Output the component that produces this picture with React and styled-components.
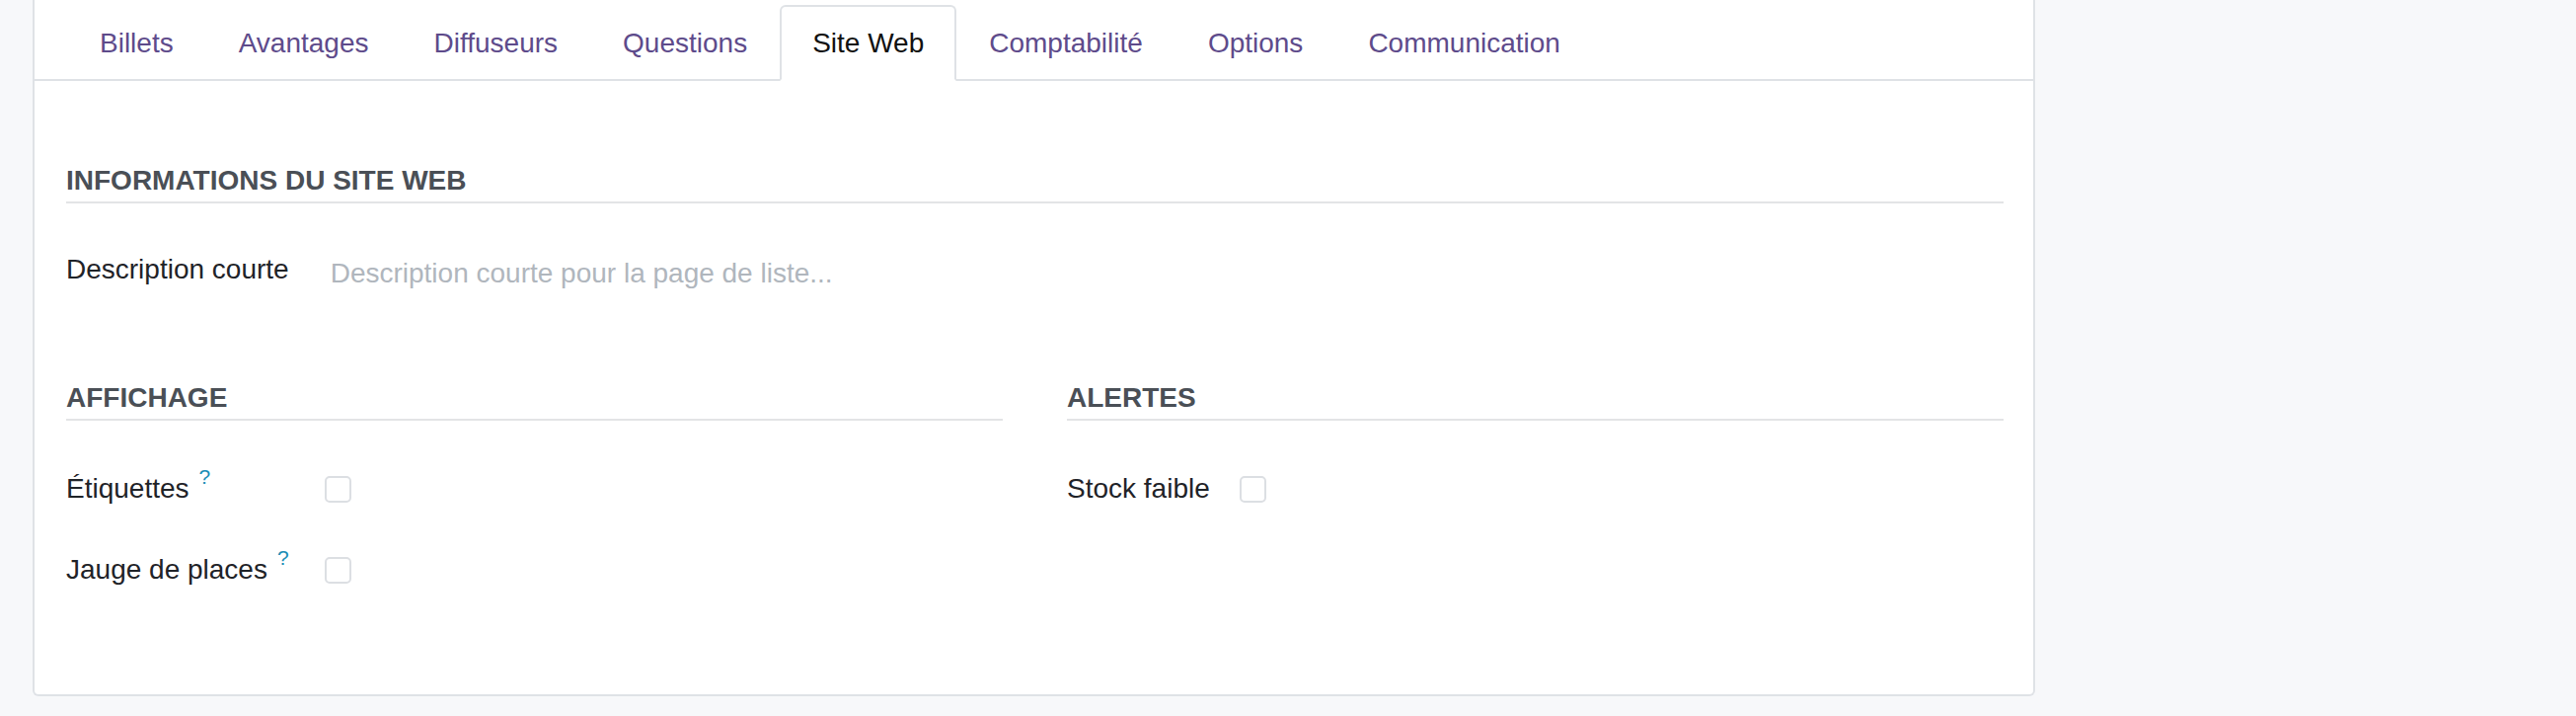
import React from "react";
import styled, { createGlobalStyle } from "styled-components";

const colors = {
  page: "#f7f8fa",
  sheet: "#ffffff",
  border: "#dfe2e6",
  rule: "#e3e4e6",
  tab: "#5e4b8b",
  tabActive: "#111111",
  heading: "#4a4f56",
  text: "#1f2328",
  placeholder: "#b0b6bd",
  help: "#1b8db5",
};

const GlobalStyle = createGlobalStyle`
  html, body {
    margin: 0;
    padding: 0;
    background: ${colors.page};
    font-family: "Liberation Sans", Arial, sans-serif;
  }
  * {
    box-sizing: border-box;
  }
`;

const Page = styled.div`
  padding: 0 0 24px 33px;
`;

const Sheet = styled.div`
  width: 2029px;
  background: ${colors.sheet};
  border: 2px solid ${colors.border};
  border-top: none;
  border-radius: 0 0 6px 6px;
`;

const TabList = styled.nav`
  display: flex;
  padding: 5px 33px 0;
  border-bottom: 2px solid ${colors.border};
`;

const Tab = styled.div`
  display: flex;
  align-items: center;
  height: 77px;
  margin-bottom: -2px;
  padding: 0 31px;
  font-size: 28px;
  color: ${(p) => (p.$active ? colors.tabActive : colors.tab)};
  background: ${(p) => (p.$active ? colors.sheet : "transparent")};
  border: 2px solid ${(p) => (p.$active ? colors.border : "transparent")};
  border-bottom-color: ${(p) => (p.$active ? colors.sheet : "transparent")};
  border-radius: 6px 6px 0 0;
  white-space: nowrap;
  cursor: pointer;
`;

const Body = styled.div`
  padding: 80px 30px 105px 32px;
`;

const Heading = styled.h3`
  margin: 0;
  font-size: 28px;
  line-height: 42px;
  font-weight: 700;
  text-transform: uppercase;
  color: ${colors.heading};
  border-bottom: 2px solid ${colors.rule};
`;

const Group = styled.div`
  display: grid;
  grid-template-columns: max-content 1fr;
  column-gap: ${(p) => p.$labelGap}px;
  row-gap: 40px;
  align-items: ${(p) => p.$align || "center"};
  margin-top: ${(p) => p.$top}px;
`;

const Label = styled.label`
  font-size: 28px;
  line-height: 42px;
  color: ${colors.text};
  white-space: nowrap;
`;

const Help = styled.sup`
  margin-left: 10px;
  font-size: 21px;
  line-height: 0;
  vertical-align: 14px;
  color: ${colors.help};
  cursor: help;
`;

const TextField = styled.input`
  width: 100%;
  height: 46px;
  padding: 4px 2px 0;
  border: none;
  outline: none;
  background: transparent;
  font-family: inherit;
  font-size: 28px;
  line-height: 42px;
  color: ${colors.text};

  &::placeholder {
    color: ${colors.placeholder};
  }
`;

const Checkbox = styled.input.attrs({ type: "checkbox" })`
  display: block;
  appearance: none;
  width: 27px;
  height: 27px;
  margin: 0;
  border: 2px solid #dcdfe3;
  border-radius: 5px;
  background: #fff;
`;

const Columns = styled.div`
  display: grid;
  grid-template-columns: 1fr 1fr;
  column-gap: 65px;
  margin-top: 84px;
`;

const tabs = [
  "Billets",
  "Avantages",
  "Diffuseurs",
  "Questions",
  "Site Web",
  "Comptabilité",
  "Options",
  "Communication",
];

const CheckRow = ({ label, help }) => (
  <>
    <Label>
      {label}
      {help && <Help>?</Help>}
    </Label>
    <div>
      <Checkbox />
    </div>
  </>
);

const App = () => (
  <Page>
    <GlobalStyle />
    <Sheet>
      <TabList>
        {tabs.map((t) => (
          <Tab key={t} $active={t === "Site Web"}>
            {t}
          </Tab>
        ))}
      </TabList>
      <Body>
        <Heading>Informations du site web</Heading>
        <Group $top={46} $labelGap={40} $align="start">
          <Label>Description courte</Label>
          <TextField placeholder="Description courte pour la page de liste..." />
        </Group>

        <Columns>
          <div>
            <Heading>Affichage</Heading>
            <Group $top={48} $labelGap={36}>
              <CheckRow label="Étiquettes" help />
              <CheckRow label="Jauge de places" help />
            </Group>
          </div>
          <div>
            <Heading>Alertes</Heading>
            <Group $top={48} $labelGap={30}>
              <CheckRow label="Stock faible" />
            </Group>
          </div>
        </Columns>
      </Body>
    </Sheet>
  </Page>
);

export default App;
